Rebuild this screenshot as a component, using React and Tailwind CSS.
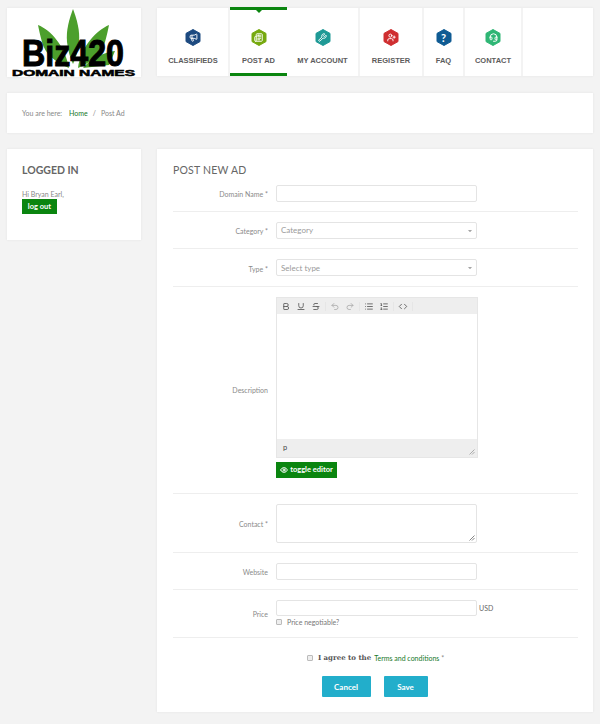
import React from 'react';
import { Megaphone, Newspaper, Wrench, UserPlus, Headset, Bold, Underline, Strikethrough, Undo2, Redo2, List, ListOrdered, Code, Eye, ChevronDown } from 'lucide-react';

const HexIcon = ({ color, children }) => (
  <svg width="16" height="17" viewBox="0 0 16 17" className="block">
    <path d="M8 0.5 L15 4.4 V12.6 L8 16.5 L1 12.6 V4.4 Z" fill={color} stroke={color} strokeLinejoin="round" />
    {children}
  </svg>
);

const navItems = [
  { label: 'CLASSIFIEDS', width: 'w-[72px]', color: '#1d4a80', Icon: Megaphone },
  { label: 'POST AD', width: 'w-[57px]', color: '#76a90f', Icon: Newspaper, active: true },
  { label: 'MY ACCOUNT', width: 'w-[73px]', color: '#1f9a96', Icon: Wrench },
  { label: 'REGISTER', width: 'w-[64px]', color: '#cf2e30', Icon: UserPlus },
  { label: 'FAQ', width: 'w-[41px]', color: '#0f5b93', text: '?' },
  { label: 'CONTACT', width: 'w-[58px]', color: '#2fb675', Icon: Headset },
];

const Logo = () => (
  <svg width="134" height="69" viewBox="0 0 134 69" className="block">
    <g fill="#4c9f2c">
      <path d="M66 1 C70 12 73 22 72 34 C71 42 69 50 66 56 C63 50 61 42 60 34 C59 22 62 12 66 1 Z" />
      <path d="M31 17 C44 22 58 38 62 60 C48 54 38 46 35 34 C33 27 32 22 31 17 Z" />
      <path d="M102 17 C90 22 74 38 71 60 C85 54 95 46 98 34 C100 27 101 22 102 17 Z" />
      <path d="M108 43 C98 44 84 50 76 60 L102 57 Z" />
    </g>
    <text x="15" y="58" textLength="102" lengthAdjust="spacingAndGlyphs" fontFamily="'Liberation Sans', sans-serif" fontWeight="700" fontSize="36" fill="#000" stroke="#000" strokeWidth="1">Biz420</text>
    <text x="5" y="68" textLength="123" lengthAdjust="spacingAndGlyphs" fontFamily="'Liberation Sans', sans-serif" fontWeight="700" fontSize="8.5" fill="#000" stroke="#000" strokeWidth="0.5">DOMAIN NAMES</text>
  </svg>
);

const Label = ({ children, className = 'mt-[2px]' }) => (
  <label className={`w-[95px] shrink-0 text-right text-[7px] leading-[10px] text-[#8a8a8a] ${className}`}>{children}</label>
);

const Input = ({ placeholder, select, className = 'h-[17px]' }) => (
  <div className={`relative flex w-[201px] items-center rounded-[2px] border border-[#e4e4e4] bg-white px-[4px] text-[8px] text-[#9a9a9a] ${className}`}>
    {placeholder}
    {select && <ChevronDown className="absolute right-[3px] top-[5px] h-[6px] w-[6px] text-[#888]" fill="#888" />}
  </div>
);

const Row = ({ className, children }) => (
  <div className={`flex items-center gap-[8px] border-b border-[#eeeeee] ${className}`}>{children}</div>
);

const toolGroups = [
  [Bold, Underline, Strikethrough],
  [Undo2, Redo2],
  [List, ListOrdered],
  [Code],
];

export default function App() {
  return (
    <div className="min-h-[724px] bg-[#f3f3f3] px-[7px] pb-[12px] pt-[8px] font-['Lato',sans-serif] text-[#777]">
      {/* cabecera */}
      <header className="flex gap-[16px]">
        <div className="h-[69px] w-[134px] shrink-0 overflow-hidden bg-white shadow-[0_0_2px_#e2e2e2]">
          <Logo />
        </div>
        <nav className="flex h-[68px] flex-1 bg-white pl-px shadow-[0_0_2px_#e2e2e2]">
          {navItems.map(({ label, width, color, Icon, text, active }) => (
            <a
              key={label}
              className={`relative flex ${width} shrink-0 flex-col items-center pt-[21px] ${active ? '-mt-px h-[69px] border-y-[3px] border-[#0a850f]' : 'border-r-2 border-[#f3f3f3]'}`}
            >
              {active && <span className="absolute left-1/2 top-0 h-0 w-0 -translate-x-1/2 border-x-[3px] border-t-[3px] border-x-transparent border-t-[#0a850f]" />}
              <span className={`relative ${active ? '-mt-[2px]' : ''}`}>
                <HexIcon color={color} />
                <span className="absolute inset-0 flex items-center justify-center text-[11px] font-bold leading-none text-white">
                  {Icon ? <Icon className="h-[9px] w-[9px]" strokeWidth={2.5} /> : text}
                </span>
              </span>
              <span className="mt-[9px] whitespace-nowrap font-['Liberation_Sans',sans-serif] text-[7.5px] font-bold leading-[11px] text-[#5c5c5c]">{label}</span>
            </a>
          ))}
        </nav>
      </header>

      {/* breadcrumb */}
      <div className="mt-[16px] flex h-[40px] items-center bg-white pl-[15px] text-[7px] text-[#888] shadow-[0_0_2px_#e2e2e2]">
        <span>You are here:</span>
        <a className="ml-[7px] text-[#16782a]">Home</a>
        <span className="mx-[5px]">/</span>
        <span>Post Ad</span>
      </div>

      <div className="mt-[16px] flex items-start gap-[16px]">
        {/* lateral */}
        <aside className="h-[91px] w-[134px] shrink-0 bg-white px-[15px] pt-[14px] shadow-[0_0_2px_#e2e2e2]">
          <h3 className="text-[10.5px] font-bold leading-[14px] text-[#666]">LOGGED IN</h3>
          <p className="mt-[12px] text-[7px] leading-[10px] text-[#888]">Hi Bryan Earl,</p>
          <button className="block h-[15px] w-[35px] bg-[#0a850f] text-center text-[7.5px] font-bold leading-[15px] text-white">log out</button>
        </aside>

        {/* formulario */}
        <main className="h-[563px] flex-1 bg-white pl-[16px] pr-[15px] pt-[14px] shadow-[0_0_2px_#e2e2e2]">
          <h2 className="text-[10.5px] font-normal leading-[14px] tracking-[0.2px] text-[#666]">POST NEW AD</h2>

          <Row className="mt-[8px] h-[27px] items-start">
            <Label className="mt-[4px]">Domain Name *</Label>
            <Input />
          </Row>
          <Row className="h-[37px]">
            <Label>Category *</Label>
            <Input placeholder="Category" select />
          </Row>
          <Row className="h-[38px]">
            <Label>Type *</Label>
            <Input placeholder="Select type" select />
          </Row>

          <Row className="h-[207px] items-start">
            <Label className="self-center">Description</Label>
            <div className="mt-[10px] w-[202px]">
              <div className="border border-[#e6e6e6]">
                <div className="flex h-[16px] items-center gap-[3px] bg-[#eeeeee] pl-[3px] text-[#555]">
                  {toolGroups.map((group, i) => (
                    <div key={i} className="flex gap-[3px] border-r border-[#e6e6e6] pr-[3px]">
                      {group.map((Tool, j) => (
                        <Tool key={j} className={`h-[9px] w-[12px] ${i === 1 ? 'text-[#aaa]' : ''}`} strokeWidth={2.2} />
                      ))}
                    </div>
                  ))}
                </div>
                <div className="h-[125px] bg-white" />
                <div className="relative flex h-[18px] items-center bg-[#eeeeee] pl-[6px] text-[7.5px] text-[#444]">
                  p
                  <svg width="6" height="6" viewBox="0 0 6 6" className="absolute bottom-[2px] right-[2px]">
                    <path d="M0.5 5.5 L5.5 0.5 M3 5.5 L5.5 3" stroke="#999" strokeWidth="0.8" />
                  </svg>
                </div>
              </div>
              <button className="mt-[4px] flex h-[16px] w-[61px] items-center justify-center gap-[2px] bg-[#0a850f] text-[7.5px] font-bold text-white">
                <Eye className="h-[8px] w-[8px]" strokeWidth={3} />
                toggle editor
              </button>
            </div>
          </Row>

          <Row className="h-[59px]">
            <Label>Contact *</Label>
            <div className="relative h-[39px] w-[201px] rounded-[2px] border border-[#e4e4e4] bg-white">
              <svg width="6" height="6" viewBox="0 0 6 6" className="absolute bottom-px right-px">
                <path d="M0.5 5.5 L5.5 0.5 M3 5.5 L5.5 3" stroke="#666" strokeWidth="0.8" />
              </svg>
            </div>
          </Row>
          <Row className="h-[37px]">
            <Label>Website</Label>
            <Input />
          </Row>

          <Row className="h-[48px]">
            <Label className="">Price</Label>
            <div>
              <div className="flex items-center gap-[2px]">
                <Input className="h-[16px]" />
                <span className="text-[7px] text-[#666]">USD</span>
              </div>
              <div className="mt-[1px] flex items-center gap-[5px]">
                <span className="h-[6px] w-[6px] rounded-[1px] border border-[#bbb] bg-[#eee]" />
                <span className="text-[7px] leading-[10px] text-[#777]">Price negotiable?</span>
              </div>
            </div>
          </Row>

          <div className="mt-[15px] flex items-center justify-center gap-[5px] text-[7px] leading-[10px]">
            <span className="h-[6px] w-[6px] rounded-[1px] border border-[#bbb] bg-[#eee]" />
            <span className="font-['DejaVu_Serif',serif] text-[7px] font-bold text-[#555]">I agree to the</span>
            <span className="-ml-[2px] text-[#16782a]">Terms and conditions <span className="text-[#888]">*</span></span>
          </div>
          <div className="mt-[13px] flex justify-center gap-[13px] pr-[2px]">
            <button className="h-[21px] w-[49px] rounded-[1px] bg-[#22aecb] text-[8px] font-bold text-white">Cancel</button>
            <button className="h-[21px] w-[44px] rounded-[1px] bg-[#22aecb] text-[8px] font-bold text-white">Save</button>
          </div>
        </main>
      </div>
    </div>
  );
}
